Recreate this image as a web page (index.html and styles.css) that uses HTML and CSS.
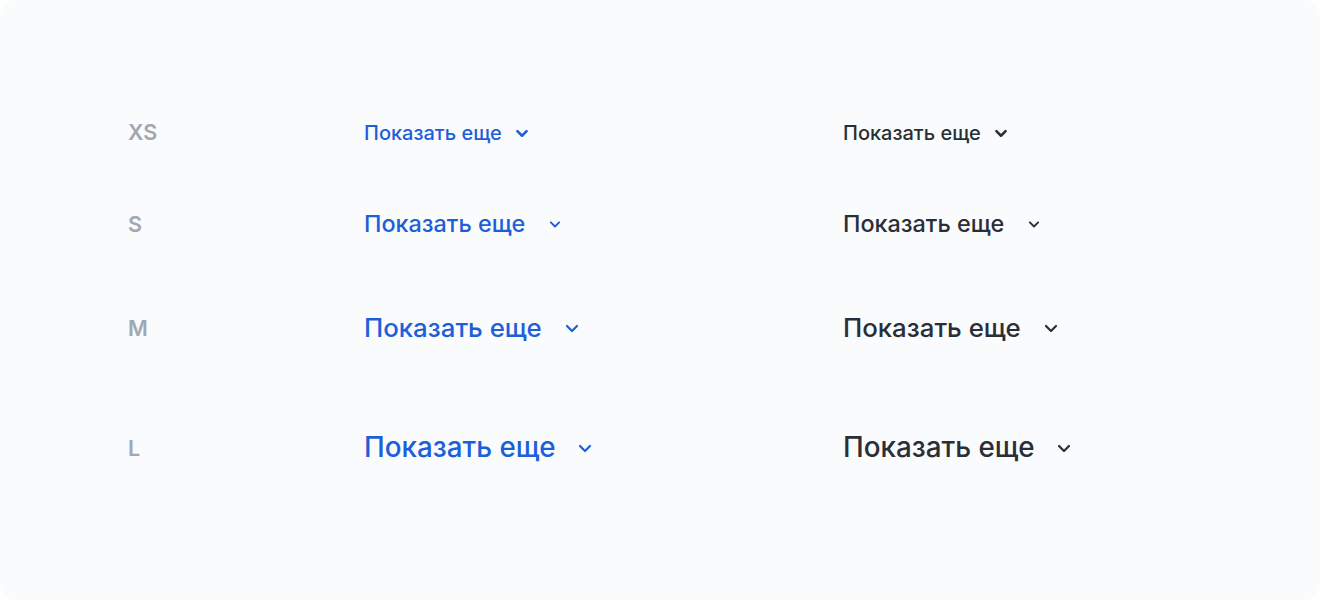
FILE: index.html
```html
<!DOCTYPE html>
<html lang="ru">
<head>
<meta charset="utf-8">
<link rel="stylesheet" href="styles.css">
</head>
<body>
<div class="card">
  <div class="row row-xs">
    <div class="label">XS</div>
    <div class="cell"><a class="more more-xs blue">Показать еще<svg class="chev" viewBox="0 0 24 24"><path d="M7 10l5 5 5-5"/></svg></a></div>
    <div class="cell"><a class="more more-xs dark">Показать еще<svg class="chev" viewBox="0 0 24 24"><path d="M7 10l5 5 5-5"/></svg></a></div>
  </div>
  <div class="row row-s">
    <div class="label">S</div>
    <div class="cell"><a class="more more-s blue">Показать еще<svg class="chev" viewBox="0 0 24 24"><path d="M7 10l5 5 5-5"/></svg></a></div>
    <div class="cell"><a class="more more-s dark">Показать еще<svg class="chev" viewBox="0 0 24 24"><path d="M7 10l5 5 5-5"/></svg></a></div>
  </div>
  <div class="row row-m">
    <div class="label">M</div>
    <div class="cell"><a class="more more-m blue">Показать еще<svg class="chev" viewBox="0 0 24 24"><path d="M7 10l5 5 5-5"/></svg></a></div>
    <div class="cell"><a class="more more-m dark">Показать еще<svg class="chev" viewBox="0 0 24 24"><path d="M7 10l5 5 5-5"/></svg></a></div>
  </div>
  <div class="row row-l">
    <div class="label">L</div>
    <div class="cell"><a class="more more-l blue">Показать еще<svg class="chev" viewBox="0 0 24 24"><path d="M7 10l5 5 5-5"/></svg></a></div>
    <div class="cell"><a class="more more-l dark">Показать еще<svg class="chev" viewBox="0 0 24 24"><path d="M7 10l5 5 5-5"/></svg></a></div>
  </div>
</div>
</body>
</html>
```
FILE: styles.css
```css
html, body {
  margin: 0;
  padding: 0;
  background: #ffffff;
}
body {
  font-family: Inter, "Noto Sans", sans-serif;
}
.card {
  width: 1320px;
  height: 600px;
  box-sizing: border-box;
  background: #f9fbfd;
  border-radius: 16px;
  padding: 112px 0 0 128px;
}
.row {
  display: grid;
  grid-template-columns: 236px 479px auto;
  align-items: center;
}
.row-xs { height: 40px; }
.row-s { height: 44px; margin-top: 50px; }
.row-m { height: 48px; margin-top: 58px; }
.row-l { height: 56px; margin-top: 68px; }
.label {
  font-size: 21.5px;
  font-weight: 600;
  color: #a1a8b1;
  line-height: 1;
  padding-top: 2px;
}
.more {
  display: inline-flex;
  align-items: center;
  font-weight: 500;
  text-decoration: none;
  white-space: nowrap;
  line-height: 1;
}
.blue { color: #1d5fd8; }
.dark { color: #2a2e36; }
.chev {
  flex: none;
  fill: none;
  stroke: currentColor;
  stroke-width: 2.2;
  stroke-linecap: round;
  stroke-linejoin: round;
}
.more-xs { font-size: 20px; padding-top: 1px; }
.more-xs .chev { width: 22px; height: 22px; margin-left: 9px; stroke-width: 2.8; }
.more-s { font-size: 23.4px; }
.more-s .chev { width: 20px; height: 20px; margin-left: 20px; }
.more-m { font-size: 25.8px; }
.more-m .chev { width: 24px; height: 24px; margin-left: 18px; }
.more-l { font-size: 27.8px; }
.more-l .chev { width: 24px; height: 24px; margin-left: 17px; }
```
